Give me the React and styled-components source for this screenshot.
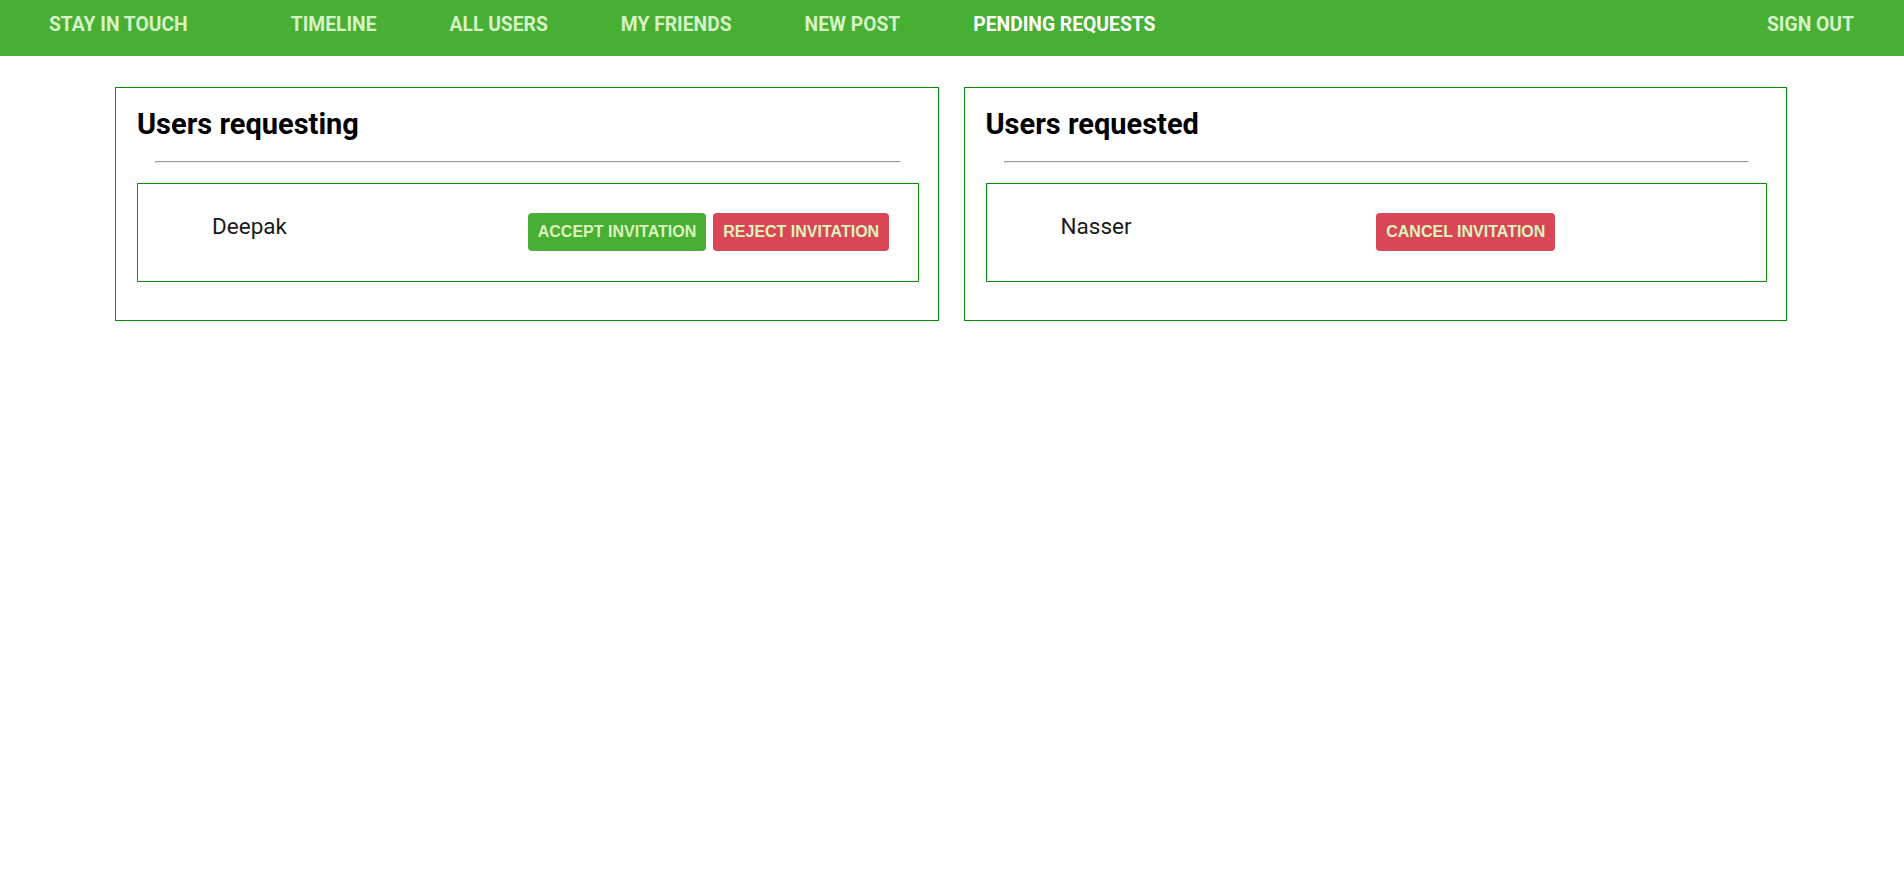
import React from 'react'
import styled, { createGlobalStyle } from 'styled-components'

const GlobalStyle = createGlobalStyle`
    body {
        margin: 0;
        background: #fff;
        font-family: Roboto, "Liberation Sans", sans-serif;
    }
`

const requesting = [{ id: 1, name: 'Deepak' }]
const requested = [{ id: 2, name: 'Nasser' }]

function App() {
    return (
        <>
            <GlobalStyle />
            <NavBar>
                <Brand>Stay in touch</Brand>
                <Links>
                    <NavLink>Timeline</NavLink>
                    <NavLink>All users</NavLink>
                    <NavLink>My friends</NavLink>
                    <NavLink>New post</NavLink>
                    <NavLink active>Pending requests</NavLink>
                </Links>
                <SignOut>Sign out</SignOut>
            </NavBar>
            <Main>
                <Card>
                    <Title>Users requesting</Title>
                    <Divider />
                    {requesting.map(user => (
                        <UserRow key={user.id}>
                            <UserName>{user.name}</UserName>
                            <Actions>
                                <Button>Accept invitation</Button>
                                <Button danger>Reject invitation</Button>
                            </Actions>
                        </UserRow>
                    ))}
                </Card>
                <Card>
                    <Title>Users requested</Title>
                    <Divider />
                    {requested.map(user => (
                        <UserRow key={user.id}>
                            <UserName>{user.name}</UserName>
                            <Actions>
                                <Button danger>Cancel invitation</Button>
                            </Actions>
                        </UserRow>
                    ))}
                </Card>
            </Main>
        </>
    )
}

export default App

const NavBar = styled.nav`
    height: 56px;
    box-sizing: border-box;
    background: #47af34;
    display: flex;
    align-items: center;
    padding: 0 50px 7px 49px;
    font-family: Roboto, sans-serif;
    font-weight: 700;
    font-size: 19.3px;
    text-transform: uppercase;
    color: #d6f3c6;
`

const Brand = styled.a`
    cursor: pointer;
`

const Links = styled.div`
    display: flex;
    gap: 73px;
    margin-left: 103px;
`

const NavLink = styled.a`
    cursor: pointer;
    color: ${props => (props.active ? '#ffffff' : '#d6f3c6')};
`

const SignOut = styled.a`
    margin-left: auto;
    cursor: pointer;
`

const Main = styled.main`
    display: grid;
    grid-template-columns: 1fr 1fr;
    gap: 25px;
    padding: 31px 117px 0 115px;
    align-items: start;
`

const Card = styled.section`
    border: 1px solid #0b8f0b;
    padding: 19px 19px 38px 21px;
`

const Title = styled.h2`
    margin: 0;
    font-size: 29px;
    font-weight: 700;
    color: #000;
`

const Divider = styled.hr`
    margin: 20px 18px 20px;
`

const UserRow = styled.div`
    display: grid;
    grid-template-columns: 1fr 1fr;
    align-items: start;
    border: 1px solid #0b8f0b;
    padding: 29px 0 30px;
`

const UserName = styled.div`
    padding-left: 74px;
    font-size: 22.5px;
    color: #1a1a1a;
`

const Actions = styled.div`
    display: flex;
    gap: 7px;
`

const Button = styled.button`
    height: 38px;
    padding: 0 10px;
    border: none;
    border-radius: 4px;
    background: ${props => (props.danger ? '#d94757' : '#47af34')};
    color: #dcf3bd;
    font-family: "Liberation Sans", Arial, sans-serif;
    font-weight: 700;
    font-size: 16px;
    text-transform: uppercase;
    cursor: pointer;
`
